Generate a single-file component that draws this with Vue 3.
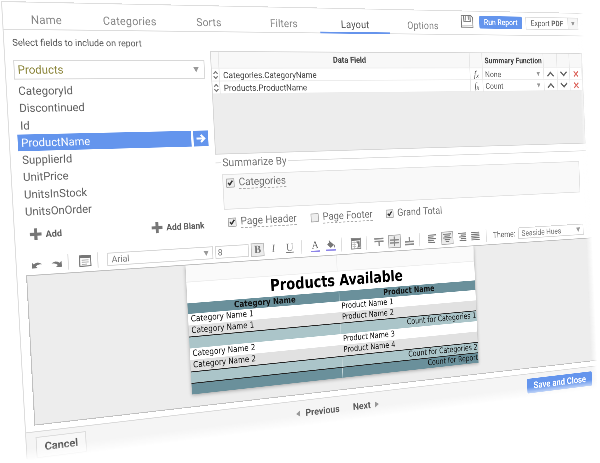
<script setup>
import { ref } from 'vue'

// The panel is laid out at 720 x 440 and rendered at double density.
const W = 1440
const H = 880

// Maps the flat W x H panel onto a quadrilateral (tl, tr, br, bl).
function perspective([x0, y0], [x1, y1], [x2, y2], [x3, y3]) {
  const dx1 = x1 - x2, dx2 = x3 - x2, dx3 = x0 - x1 + x2 - x3
  const dy1 = y1 - y2, dy2 = y3 - y2, dy3 = y0 - y1 + y2 - y3
  const det = dx1 * dy2 - dx2 * dy1
  const g = (dx3 * dy2 - dx2 * dy3) / det
  const h = (dx1 * dy3 - dx3 * dy1) / det
  const m = [
    (x1 - x0 + g * x1) / W, (y1 - y0 + g * y1) / W, 0, g / W,
    (x3 - x0 + h * x3) / H, (y3 - y0 + h * y3) / H, 0, h / H,
    0, 0, 1, 0,
    x0, y0, 0, 1,
  ]
  return `matrix3d(${m.map((n) => n.toFixed(9)).join(',')})`
}
const tilt = perspective([1, 1], [583, 13], [597, 365], [25, 432])

const tabs = ['Name', 'Categories', 'Sorts', 'Filters', 'Layout', 'Options']
const activeTab = ref('Layout')
const fields = ['CategoryId', 'Discontinued', 'Id', 'ProductName', 'SupplierId', 'UnitPrice', 'UnitsInStock', 'UnitsOnOrder']
const selected = ref('ProductName')
const dataRows = [
  { name: 'Categories.CategoryName', fn: 'None' },
  { name: 'Products.ProductName', fn: 'Count' },
]
const options = [
  { label: 'Page Header', on: true, dotted: true, cls: 'w1' },
  { label: 'Page Footer', on: false, dotted: true, cls: 'w2' },
  { label: 'Grand Total', on: true, dotted: false, cls: 'w3' },
]
const report = [
  { kind: 'plain', left: 'Category Name 1', right: 'Product Name 1' },
  { kind: 'alt', left: 'Category Name 1', right: 'Product Name 2' },
  { kind: 'sub', total: 'Count for Categories 1' },
  { kind: 'plain', left: 'Category Name 2', right: 'Product Name 3' },
  { kind: 'alt', left: 'Category Name 2', right: 'Product Name 4' },
  { kind: 'sub', total: 'Count for Categories 2' },
  { kind: 'grand', total: 'Count for Report' },
]
const aligns = [
  { id: 'l', d: 'M0 .7H12M0 3H8M0 5.3H11M0 7.6H8M0 9.9H10' },
  { id: 'c', d: 'M0 .7H12M2 3H10M0 5.3H12M2 7.6H10M3.5 9.9H8.5' },
  { id: 'r', d: 'M0 .7H12M4 3H12M1 5.3H12M4 7.6H12M2 9.9H12' },
  { id: 'j', d: 'M0 .7H12M0 3H12M0 5.3H12M0 7.6H12M0 9.9H12' },
]
</script>

<template>
  <div class="stage">
    <div class="tilt" :style="{ transform: tilt }">
      <div class="panel">
        <header class="top">
          <nav class="tabs">
            <span v-for="t in tabs" :key="t" class="tab" :class="{ active: t === activeTab }">{{ t }}</span>
          </nav>
          <svg class="save" viewBox="0 0 18 16">
            <path d="M.8 .8H14.5L17.2 3.4V15.2H.8Z" fill="#fff" stroke="#777" stroke-width="1.2" />
            <path d="M4.5 1V8H13.5V1M10.8 1.5V6" fill="none" stroke="#777" stroke-width="1.3" />
            <path d="M7 1V7" stroke="#999" stroke-width="1.6" />
            <path d="M1 12.8H17" stroke="#bbb" stroke-width=".8" />
          </svg>
          <button class="run">Run Report</button>
          <div class="export"><span>Export <b>PDF</b></span><i><em class="caret"></em></i></div>
        </header>

        <p class="hint">Select fields to include on report</p>

        <main class="main">
          <section class="left">
            <div class="source"><span>Products</span><em class="caret big"></em></div>
            <ul class="fields">
              <li v-for="f in fields" :key="f" :class="{ on: f === selected }">
                <span class="fname">{{ f }}</span>
                <span v-if="f === selected" class="go">
                  <svg viewBox="0 0 12 10"><path d="M1 5H9.5M6 1.2L10 5L6 8.8" fill="none" stroke="#fff" stroke-width="2.2" /></svg>
                </span>
              </li>
            </ul>
            <div class="adds">
              <span class="add"><svg viewBox="0 0 12 12"><path d="M6 0V12M0 6H12" stroke="#777" stroke-width="3.2" /></svg>Add</span>
              <span class="add"><svg viewBox="0 0 12 12"><path d="M6 0V12M0 6H12" stroke="#777" stroke-width="3.2" /></svg>Add Blank</span>
            </div>
          </section>

          <section class="right">
            <div class="grid">
              <div class="row head">
                <span></span><span class="mid">Data Field</span><span></span><span class="sum">Summary Function</span><span></span><span></span><span></span>
              </div>
              <div v-for="r in dataRows" :key="r.name" class="row">
                <span><svg class="sort" viewBox="0 0 7 10"><path d="M1 3.6L3.5 1L6 3.6M1 6.4L3.5 9L6 6.4" fill="none" stroke="#777" stroke-width="1.4" /></svg></span>
                <span class="name">{{ r.name }}</span>
                <span class="fx">f<small>x</small></span>
                <span class="fn">{{ r.fn }}<em class="caret"></em></span>
                <span><svg class="act" viewBox="0 0 12 8"><path d="M1 7L6 2L11 7" fill="none" stroke="#666" stroke-width="2" /></svg></span>
                <span><svg class="act" viewBox="0 0 12 8"><path d="M1 1L6 6L11 1" fill="none" stroke="#666" stroke-width="2" /></svg></span>
                <span><svg class="act" viewBox="0 0 12 10"><path d="M2 1L10 9M10 1L2 9" stroke="#dd6a62" stroke-width="1.9" /></svg></span>
              </div>
            </div>

            <div class="legend"><i class="stub"></i><span>Summarize By</span><i class="line"></i></div>
            <div class="sumbox">
              <span class="check"><svg viewBox="0 0 10 10"><path d="M2 5L4.2 7.4L8.2 2.2" fill="none" stroke="#333" stroke-width="2" /></svg></span>
              <span class="label dotted">Categories</span>
            </div>
            <div class="options">
              <span v-for="o in options" :key="o.label" class="option" :class="o.cls">
                <span class="check"><svg v-if="o.on" viewBox="0 0 10 10"><path d="M2 5L4.2 7.4L8.2 2.2" fill="none" stroke="#333" stroke-width="2" /></svg></span>
                <span class="label" :class="{ dotted: o.dotted }">{{ o.label }}</span>
              </span>
            </div>
          </section>
        </main>

        <div class="toolbar">
          <div class="tg undo">
            <svg viewBox="0 0 12 9"><path d="M0 1.5V8.5H7L4.7 6.3Q7 3.6 12 4.2Q7 -.2 2.3 3.8Z" fill="#777" /></svg>
            <svg viewBox="0 0 12 9"><path d="M12 1.5V8.5H5L7.3 6.3Q5 3.6 0 4.2Q5 -.2 9.7 3.8Z" fill="#777" /></svg>
          </div>
          <div class="tg props">
            <svg viewBox="0 0 14 13"><rect x=".6" y=".6" width="12.8" height="11.8" fill="#fff" stroke="#777" stroke-width="1.2" /><path d="M0 2H14" stroke="#777" stroke-width="2.6" /><path d="M3 5.6H11M3 7.9H11M3 10.2H9" stroke="#999" stroke-width="1" /></svg>
          </div>
          <div class="tg font">
            <div class="select family">Arial<em class="caret big"></em></div>
            <div class="select size">8</div>
            <span class="letter boxed"><b>B</b></span>
            <span class="letter it">I</span>
            <span class="letter un">U</span>
          </div>
          <div class="tg color">
            <span class="ink">A</span>
            <svg viewBox="0 0 13 13"><path d="M1.5 5.2L5.5 1.8L10.5 6L6 9.5Z" fill="#777" /><path d="M4 .8L7 4" stroke="#777" stroke-width="1.2" /><path d="M10.8 5.5Q12.8 9 11.4 9.4Q10 9 10.8 5.5" fill="#777" /><path d="M0 12H12.5" stroke="#8c84e8" stroke-width="1.8" /></svg>
          </div>
          <div class="tg table">
            <svg viewBox="0 0 14 14"><rect x=".6" y=".6" width="12.8" height="12.8" fill="#fff" stroke="#888" stroke-width="1.1" /><path d="M1 2.2H13" stroke="#777" stroke-width="2.2" /><path d="M2 5.5H8M2 8H7M2 10.5H7M4.5 4V13" stroke="#bbb" stroke-width=".9" /><path d="M7.5 4.5H12V12H8.5L10 8.5Z" fill="#777" /></svg>
          </div>
          <div class="tg valign">
            <svg viewBox="0 0 13 12"><path d="M0 1.5H12.5M0 4.8H12.5" stroke="#888" stroke-width="1.9" /><path d="M6.3 5V10.5" stroke="#888" stroke-width="1.7" /></svg>
            <span class="box"><svg viewBox="0 0 13 12"><path d="M0 4.2H13M0 7.8H13" stroke="#888" stroke-width="1.8" /><path d="M6.5 0V12" stroke="#888" stroke-width="1.7" /></svg></span>
            <svg viewBox="0 0 13 12"><path d="M0 7.5H12.5M0 10.8H12.5" stroke="#888" stroke-width="1.9" /><path d="M6.3 2V7" stroke="#888" stroke-width="1.7" /></svg>
          </div>
          <div class="tg align">
            <span v-for="a in aligns" :key="a.id" :class="a.id === 'c' ? 'box' : 'nobox'">
              <svg viewBox="0 0 12 10.6"><path :d="a.d" stroke="#777" stroke-width="1.3" /></svg>
            </span>
          </div>
          <span class="theme">Theme:</span>
          <div class="select hues">Seaside Hues<em class="caret big"></em></div>
        </div>

        <div class="canvas">
          <div class="page">
            <div class="band"><i></i><i></i></div>
            <h1>Products Available</h1>
            <div class="cols"><span>Category Name</span><span>Product Name</span></div>
            <div v-for="(r, i) in report" :key="i" class="rline" :class="r.kind">
              <template v-if="r.total"><span></span><span class="total">{{ r.total }}</span></template>
              <template v-else><span>{{ r.left }}</span><span>{{ r.right }}</span></template>
            </div>
          </div>
        </div>

        <footer class="foot">
          <button class="cancel">Cancel</button>
          <div class="pager">
            <em class="tri prev"></em><span>Previous</span><span class="next">Next</span><em class="tri nxt"></em>
          </div>
          <button class="close">Save and Close</button>
          <div class="fade"></div>
        </footer>
        <div class="sidefade"></div>
      </div>
    </div>
  </div>
</template>

<style>
body { background: #fff; overflow: hidden; }
</style>

<style scoped>
* { box-sizing: border-box; }
.stage { width: 600px; height: 463px; overflow: hidden; background: #fff; font-family: Roboto, "Liberation Sans", sans-serif; color: #606060; text-rendering: geometricPrecision; }
.tilt { width: 1440px; height: 936px; transform-origin: 0 0; }
.panel { zoom: 2; position: relative; width: 720px; height: 468px; display: flex; flex-direction: column; border-left: 1px solid #ddd; border-top: 1px solid #ddd; background: #fff; }
button { font-family: inherit; padding: 0; border: 0; text-rendering: inherit; }
svg { display: block; overflow: visible; }
em { font-style: normal; }
.caret { width: 0; height: 0; border: 2.8px solid transparent; border-top: 5px solid #999; border-bottom: 0; }
.caret.big { border-width: 5.5px 3.2px 0; }

.top { height: 28px; flex: none; display: flex; align-items: flex-start; border-bottom: 1px solid #dcdcdc; }
.tabs { display: flex; width: 541px; height: 28px; }
.tab { width: 89px; height: 28px; padding-top: 9.5px; text-align: center; font-size: 11.8px; line-height: 16px; letter-spacing: .2px; color: #858585; }
.tab.active { color: #555; border-bottom: 2px solid #6694ec; }
.save { width: 18px; height: 15.5px; margin-top: 4px; }
.run { width: 61px; height: 15px; margin: 5px 0 0 8px; background: #6495ed; color: #fff; font-size: 9.6px; font-weight: 500; line-height: 15px; border-radius: 2px; }
.export { width: 78px; height: 15.5px; margin: 5px 0 0 5px; display: flex; border: 1px solid #ddd; font-size: 9.6px; line-height: 14px; color: #666; }
.export span { width: 61px; text-align: center; white-space: nowrap; }
.export i { flex: 1; display: flex; align-items: center; justify-content: center; background: #f6f6f6; border-left: 1px solid #ddd; }

.hint { margin: 6px 0 0 8px; height: 25px; flex: none; line-height: 14px; font-size: 9.6px; color: #555; }
.main { display: flex; height: 194.5px; flex: none; }
.left { width: 214px; padding-left: 8px; flex: none; }
.source { height: 20px; border: 1.2px solid #d8d8d8; display: flex; align-items: center; justify-content: space-between; padding: 0 6px 0 3px; margin-top: -.5px; width: 207px; font-size: 11.8px; color: #8a8438; }
.fields { list-style: none; margin: 3px 0 0; padding: 0; font-size: 11.7px; }
.fields li { height: 17.65px; line-height: 17.6px; display: flex; gap: 2.5px; width: 207px; }
.fname { padding-left: 3.5px; width: 187.5px; }
.on .fname { background: #6495ed; color: #fff; height: 17px; }
.go { flex: 1; height: 17px; background: #6495ed; display: flex; align-items: center; justify-content: center; }
.go svg { width: 12px; height: 10px; }
.adds { display: flex; padding: 8.5px 0 0 7px; gap: 97px; font-size: 9.5px; font-weight: 700; color: #5c5c5c; }
.add { display: flex; align-items: center; gap: 4px; white-space: nowrap; }
.add svg { width: 12.5px; height: 12px; }

.right { padding-left: 8px; margin-top: -10.5px; }
.grid { width: 493px; height: 112.5px; background: #ededed; border: 1px solid #d6d6d6; font-size: 9.6px; color: #444; }
.row { display: grid; grid-template-columns: 9px 319.5px 17.5px 88px 20px 18.5px 1fr; height: 14px; background: #fff; border-bottom: 1px solid #ececec; }
.row > span { border-right: 1px solid #e6e6e6; display: flex; align-items: center; justify-content: center; white-space: nowrap; }
.row.head { height: 18.2px; background: #f8f8f8; font-weight: 500; color: #444; }
.row .sum { justify-content: flex-start; padding-left: 3px; letter-spacing: .12px; font-size: 9.5px; font-weight: 700; }
.row .mid { font-size: 9.4px; font-weight: 700; }
.row .name { justify-content: flex-start; padding-left: 4px; }
.row .fn { justify-content: space-between; padding: 0 5px 0 3px; font-size: 9.6px; color: #666; }
.fx { font: italic 11px "Liberation Serif", serif; color: #555; }
.fx small { font-size: 8.5px; margin-top: 4px; }
.sort { width: 6.5px; height: 11px; }
.act { width: 11px; height: 8px; }

.legend { display: flex; align-items: center; margin-top: 2px; height: 14px; font-size: 12px; line-height: 14px; white-space: nowrap; color: #777; }
.stub { width: 6px; height: 1px; background: #ddd; margin-right: 2px; }
.line { flex: 1; height: 1px; background: #dcdcdc; margin-left: 2px; }
.sumbox { margin: 5.5px 0 0 7px; width: 475px; height: 39px; background: #f9f9f9; border: 1px solid #e2e2e2; padding: 1.5px 0 0 3px; display: flex; align-items: flex-start; gap: 5px; }
.check { width: 10px; height: 10px; margin-top: 2.5px; flex: none; border: 1px solid #aaa; border-radius: 1px; background: #eee; }
.check svg { width: 9px; height: 8.5px; margin: -.5px; }
.label { font-size: 11.8px; line-height: 13.5px; white-space: nowrap; color: #707070; }
.label.dotted { border-bottom: 1px dashed #aaa; }
.options { display: flex; margin: 6.5px 0 0 11px; }
.option { display: flex; gap: 5px; align-items: flex-start; }
.w1 { width: 100px; } .w2 { width: 96px; }

.toolbar { height: 25px; flex: none; display: flex; align-items: center; padding-top: 3px; }
.tg { display: flex; align-items: center; height: 16px; border-right: 1px solid #ddd; flex: none; }
.undo { padding: 2px 0 0 15.5px; gap: 10px; width: 54px; height: 16px; }
.undo svg { width: 10.5px; height: 8px; }
.props { width: 31.5px; padding-left: 11px; }
.props svg { width: 13px; height: 12px; }
.font { width: 235px; padding-left: 9.5px; }
.select { height: 14px; border: 1px solid #d6d6d6; display: flex; align-items: center; justify-content: space-between; padding: 0 4px; font-size: 9.6px; color: #777; background: #fff; white-space: nowrap; }
.family { width: 119px; }
.size { width: 39.5px; margin-left: 2.5px; padding-left: 2px; }
.letter { font: 12.5px "Liberation Serif", serif; line-height: 14px; width: 16px; text-align: center; color: #777; }
.boxed { background: #ececec; border: 1px solid #bbb; margin-left: 2.5px; line-height: 13px; height: 15px; }
.it { font-style: italic; margin-left: 3px; }
.un { text-decoration: underline; margin-left: 4px; }
.color { width: 50px; padding-left: 11px; gap: 8px; }
.ink { font: 12px "Liberation Serif", serif; line-height: 11px; width: 11px; height: 13px; text-align: center; border-bottom: 1.6px solid #8c84e8; }
.color svg { width: 12.5px; height: 12.5px; }
.table { width: 32px; padding-left: 11.5px; }
.table svg { width: 13.2px; height: 13px; }
.valign { width: 70px; padding-left: 10px; gap: 5.5px; }
.valign svg { width: 12.3px; height: 11.5px; }
.box { display: flex; align-items: center; justify-content: center; width: 16.5px; height: 15.5px; border: 1px solid #aaa; background: #ececec; }
.align { width: 92px; padding-left: 10.5px; gap: 6px; }
.align svg { width: 12.5px; height: 10px; }
.theme { font-size: 9.6px; margin-left: 9px; width: 36px; }
.hues { width: 97px; }

.canvas { margin-left: 9px; width: 711px; height: 155px; flex: none; background: #ededed; border: 1px solid #bfbfbf; border-right: 0; padding-left: 171.5px; }
.page { width: 364px; height: 140px; background: #fff; box-shadow: 0 1px 4px rgba(0, 0, 0, .3); font-family: "DejaVu Sans Condensed", "DejaVu Sans", sans-serif; font-stretch: condensed; color: #111; clip-path: inset(0 -6px -6px -6px); }
.band { display: flex; height: 18.7px; }
.band i { flex: 1; background: #fafafa; border: 1px solid #eee; border-width: 0 1px 1px 0; }
.page h1 { margin: 0; height: 22.3px; line-height: 21.4px; text-align: center; font-size: 17.8px; font-weight: 700; color: #000; white-space: nowrap; }
.cols, .rline { display: grid; grid-template-columns: 1fr 1fr; }
.cols { height: 11.4px; background: #6a909b; font-size: 9.5px; font-weight: 700; line-height: 11.4px; text-align: center; }
.cols span + span { border-left: 1px solid #8fb0b8; }
.rline { height: 12.4px; line-height: 12.4px; font-size: 9.3px; white-space: nowrap; }
.rline span { padding-left: 3px; }
.rline .total { text-align: right; padding-right: .5px; }
.alt { background: #e1e1e1; }
.sub { background: #abc5c9; border-top: 1.2px solid #222; height: 12.8px; line-height: 11.4px; }
.grand { background: #6a909b; border-top: 1.2px solid #222; line-height: 11px; }
.sub span + span, .grand span + span { border-left: 1px solid #c3d6d9; }

.foot { position: relative; margin-top: 6px; height: 29px; flex: none; background: #f5f5f5; border-top: 1px solid #dadada; display: flex; align-items: flex-start; }
.cancel { width: 53px; height: 22px; margin: 5px 0 0 9.5px; border: 1px solid #ddd; background: #f8f8f8; color: #5c5c5c; font-size: 11.4px; font-weight: 700; line-height: 19px; }
.pager { display: flex; align-items: center; height: 14px; margin: 7px 0 0 241px; width: 309px; font-size: 10.9px; font-weight: 700; color: #5c5c5c; white-space: nowrap; }
.tri { border: 3.6px solid transparent; }
.prev { border-right: 5px solid #999; border-left: 0; margin-right: 6.5px; }
.next { margin-left: 17px; }
.nxt { border-left: 5px solid #999; border-right: 0; margin-left: 5.5px; }
.close { width: 97px; height: 18px; margin-top: 5.5px; margin-left: 1px; background: #6495ed; color: #fff; font-size: 11.4px; font-weight: 700; border-radius: 2px; line-height: 18px; }
.fade { position: absolute; left: -2px; right: 0; top: 16px; height: 15px; background: linear-gradient(rgba(255, 255, 255, 0), #fff 85%); pointer-events: none; }
.sidefade { position: absolute; right: -1px; top: -2px; width: 10px; height: 472px; background: linear-gradient(90deg, rgba(255, 255, 255, 0), #fff 95%); pointer-events: none; }
</style>
